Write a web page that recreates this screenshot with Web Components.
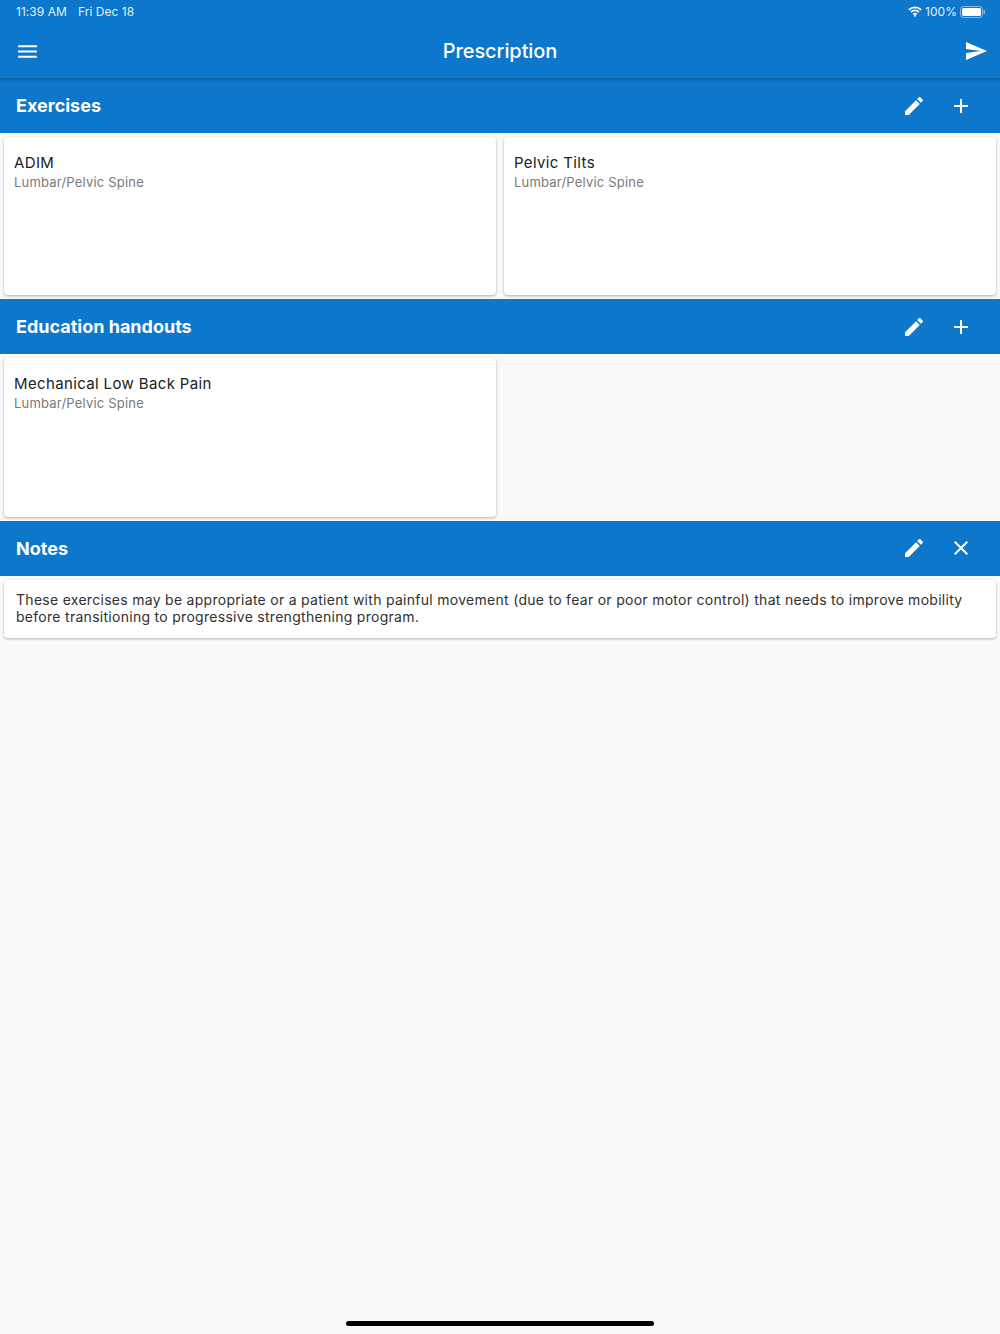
<!DOCTYPE html>
<html>
<head>
<meta charset="utf-8">
<title>Prescription</title>
<style>
  html, body { margin: 0; height: 100%; }
  body { background: #fafafa; font-family: Inter, "Liberation Sans", sans-serif; color: #212121; }
  rx-page { height: 1334px; }
</style>
</head>
<body>
<rx-page>
  <rx-appbar slot="top" time="11:39 AM" date="Fri Dec 18" battery="100%" title="Prescription"></rx-appbar>

  <rx-section title="Exercises">
    <rx-card title="ADIM" sub="Lumbar/Pelvic Spine"></rx-card>
    <rx-card title="Pelvic Tilts" sub="Lumbar/Pelvic Spine"></rx-card>
  </rx-section>

  <rx-section title="Education handouts">
    <rx-card title="Mechanical Low Back Pain" sub="Lumbar/Pelvic Spine"></rx-card>
  </rx-section>

  <rx-section title="Notes" action="close" notes>
    <rx-note>These exercises may be appropriate or a patient with painful movement (due to fear or poor motor control) that needs to improve mobility before transitioning to progressive strengthening program.</rx-note>
  </rx-section>
</rx-page>

<script>
(function() {
  const ICONS = {
    menu: '<path d="M3 18h18v-2H3v2zm0-5h18v-2H3v2zm0-7v2h18V6H3z"/>',
    send: '<path d="M2.01 21L23 12 2.01 3 2 10l15 2-15 2z"/>',
    edit: '<path d="M3 17.25V21h3.75L17.81 9.94l-3.75-3.75L3 17.25zM20.71 7.04a1 1 0 0 0 0-1.41l-2.34-2.34a1 1 0 0 0-1.41 0l-1.83 1.83 3.75 3.75 1.83-1.83z"/>',
    add: '<path d="M19 13h-6v6h-2v-6H5v-2h6V5h2v6h6v2z"/>',
    close: '<path d="M19 6.41L17.59 5 12 10.59 6.41 5 5 6.41 10.59 12 5 17.59 6.41 19 12 13.41 17.59 19 19 17.59 13.41 12z"/>'
  };

  const icon = (name, size) =>
    `<svg width="${size}" height="${size}" viewBox="0 0 24 24" fill="#fff" aria-hidden="true">${ICONS[name]}</svg>`;

  //=== Page frame
  class RxPage extends HTMLElement {
    constructor() {
      super();
      this.attachShadow({ mode: 'open' }).innerHTML = `
<style>
:host { display: flex; flex-direction: column; position: relative; background: #fafafa; }
.indicator {
  position: absolute;
  left: 346px;
  bottom: 8px;
  width: 308px;
  height: 5px;
  border-radius: 3px;
  background: #000;
}
</style>
<slot name="top"></slot>
<slot></slot>
<div class="indicator"></div>
`;
    }
  }

  //=== App bar + iOS status bar
  class RxAppbar extends HTMLElement {
    connectedCallback() {
      const a = n => this.getAttribute(n) || '';
      this.attachShadow({ mode: 'open' }).innerHTML = `
<style>
:host {
  display: block;
  position: relative;
  z-index: 1;
  height: 78px;
  background: #0d77cb;
  color: #fff;
  box-shadow: 0 1px 4px rgba(0, 0, 0, .3);
}
.status {
  display: flex;
  align-items: center;
  box-sizing: border-box;
  height: 24px;
  padding: 0 15px 1px 16px;
  font-size: 12px;
  letter-spacing: .04px;
  color: rgba(255, 255, 255, .92);
}
.status .date { margin-left: 11px; }
.status .right { margin-left: auto; display: flex; align-items: center; gap: 3px; }
.bar {
  display: flex;
  align-items: center;
  justify-content: space-between;
  height: 54px;
  padding: 0 12px 0 15px;
}
.bar .title {
  position: absolute;
  left: 0;
  right: 0;
  text-align: center;
  font-size: 20px;
  font-weight: 500;
  letter-spacing: -.1px;
  pointer-events: none;
}
.bar svg { display: block; }
</style>
<div class="status">
  <span>${a('time')}</span><span class="date">${a('date')}</span>
  <span class="right">
    <svg width="14" height="11" viewBox="0 0 14 11" fill="none" stroke="#fff" stroke-width="1.7">
      <path d="M.8 3.9a8.8 8.8 0 0 1 12.4 0"/><path d="M3 6.1a5.7 5.7 0 0 1 8 0"/><path d="M5.2 8.3a2.5 2.5 0 0 1 3.6 0"/>
      <circle cx="7" cy="9.7" r="1" fill="#fff" stroke="none"/>
    </svg>
    <span>${a('battery')}</span>
    <svg width="25" height="12" viewBox="0 0 25 12">
      <rect x=".5" y=".5" width="22" height="11" rx="3" fill="none" stroke="rgba(255,255,255,.5)"/>
      <rect x="2" y="2" width="19" height="8" rx="1.6" fill="#fff"/>
      <rect x="23.6" y="4" width="1.2" height="4" rx=".6" fill="rgba(255,255,255,.6)"/>
    </svg>
  </span>
</div>
<div class="bar">
  ${icon('menu', 25)}
  <span class="title">${a('title')}</span>
  ${icon('send', 24)}
</div>
`;
    }
  }

  //=== Section: blue header + card grid
  class RxSection extends HTMLElement {
    connectedCallback() {
      const action = this.getAttribute('action') || 'add';
      this.attachShadow({ mode: 'open' }).innerHTML = `
<style>
:host { display: block; }
.head {
  display: flex;
  align-items: center;
  height: 55px;
  padding: 0 16px;
  background: #0d77cb;
  color: #fff;
  font-size: 18px;
  font-weight: 700;
}
.head .name { flex: 1; }
.head .icons { display: flex; gap: 23px; margin-right: 11px; }
.head svg { display: block; }
.grid {
  display: grid;
  grid-template-columns: 1fr 1fr;
  gap: 8px;
  padding: 4px;
}
:host([notes]) .grid { grid-template-columns: 1fr; }
</style>
<div class="head">
  <span class="name">${this.getAttribute('title') || ''}</span>
  <span class="icons">${icon('edit', 24)}${icon(action, 24)}</span>
</div>
<div class="grid"><slot></slot></div>
`;
    }
  }

  //=== Exercise / handout card
  class RxCard extends HTMLElement {
    connectedCallback() {
      this.attachShadow({ mode: 'open' }).innerHTML = `
<style>
:host {
  display: block;
  box-sizing: border-box;
  height: 158.33px;
  padding: 16px 10px;
  background: #fff;
  border-radius: 4px;
  box-shadow: 0 1px 3px rgba(0, 0, 0, .3);
}
.title { font-size: 15px; line-height: 19px; letter-spacing: .36px; color: #212121; }
.sub { margin-top: 1px; font-size: 13px; line-height: 18px; letter-spacing: .2px; color: #7a7a7a; }
</style>
<div class="title">${this.getAttribute('title') || ''}</div>
<div class="sub">${this.getAttribute('sub') || ''}</div>
`;
    }
  }

  //=== Notes text card
  class RxNote extends HTMLElement {
    constructor() {
      super();
      this.attachShadow({ mode: 'open' }).innerHTML = `
<style>
:host {
  display: block;
  padding: 11px 12px 12px;
  background: #fff;
  border-radius: 4px;
  box-shadow: 0 1px 3px rgba(0, 0, 0, .3);
  font-size: 14px;
  line-height: 17.5px;
  letter-spacing: .285px;
  color: #303030;
}
</style>
<slot></slot>
`;
    }
  }

  customElements.define('rx-page', RxPage);
  customElements.define('rx-appbar', RxAppbar);
  customElements.define('rx-section', RxSection);
  customElements.define('rx-card', RxCard);
  customElements.define('rx-note', RxNote);
})();
</script>
</body>
</html>
